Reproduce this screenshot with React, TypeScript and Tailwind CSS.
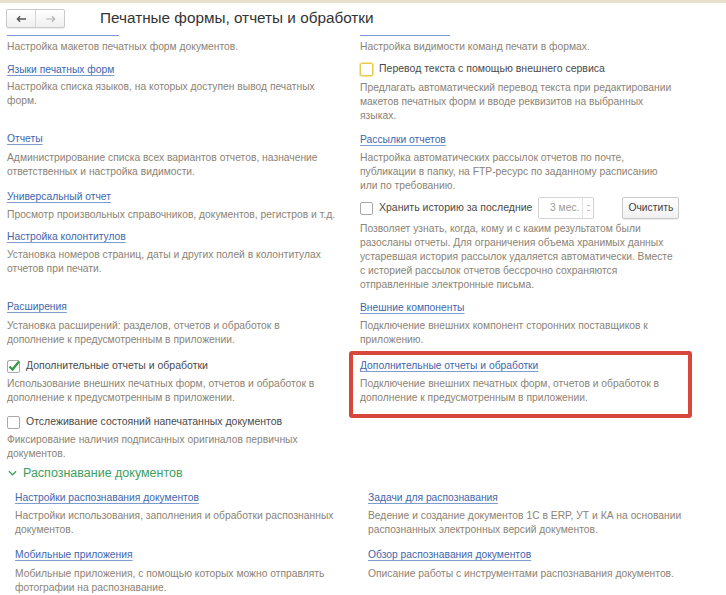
import type { ReactNode } from "react";

const font = { fontFamily: '"Liberation Sans", Arial, sans-serif' };

function Lnk({ children, className = "" }: { children: ReactNode; className?: string }) {
  return (
    <div className={`text-[10.3px] leading-[14px] h-[14px] ${className}`}>
      <span className="text-[#3e66ad] underline underline-offset-2 decoration-[#7f9ccf]">{children}</span>
    </div>
  );
}

function Desc({ lines, className = "" }: { lines: string[]; className?: string }) {
  return (
    <div className={`text-[10.3px] leading-[14px] text-[#8b8376] ${className}`}>
      {lines.map((l) => (
        <div key={l} className="whitespace-nowrap h-[14px]">{l}</div>
      ))}
    </div>
  );
}

function Check({ checked = false, focus = false }: { checked?: boolean; focus?: boolean }) {
  return (
    <span
      className={`relative inline-block w-[13px] h-[13px] rounded-[2px] bg-white shrink-0 border ${
        focus ? "border-[#e8c84a] shadow-[0_0_0_1px_#f6e6a0]" : "border-[#a9a9a9]"
      }`}
    >
      {checked && (
        <svg viewBox="0 0 14 14" className="absolute -left-[1px] -top-[2px] w-[14px] h-[14px]">
          <path d="M2.5 7.5 L5.5 10.5 L12 2.5" fill="none" stroke="#2f9a3e" strokeWidth="2.2" />
        </svg>
      )}
    </span>
  );
}

function CheckRow({ label, checked, focus, className = "" }: { label: string; checked?: boolean; focus?: boolean; className?: string }) {
  return (
    <div className={`flex items-center gap-[6px] h-[16px] text-[10.5px] text-[#4a4a4a] ${className}`}>
      <Check checked={checked} focus={focus} />
      <span className="whitespace-nowrap">{label}</span>
    </div>
  );
}

export default function App() {
  return (
    <div className="w-[726px] h-[595px] bg-white overflow-hidden" style={font}>
      <div className="h-[3px] bg-[#e8e1cb]" />

      {/* Header */}
      <div className="flex items-center h-[31px] pl-[6px]">
        <div className="flex h-[19px] border border-[#c9c9c9] rounded-[2px] bg-gradient-to-b from-white to-[#efefef] shadow-[0_1px_1px_rgba(0,0,0,0.08)]">
          <div className="w-[29px] flex items-center justify-center border-r border-[#d6d6d6]">
            <svg viewBox="0 0 12 8" className="w-[11px] h-[8px]">
              <path d="M11 4 H2 M4.5 1 L1.5 4 L4.5 7" fill="none" stroke="#555" strokeWidth="1.5" />
            </svg>
          </div>
          <div className="w-[28px] flex items-center justify-center">
            <svg viewBox="0 0 12 8" className="w-[11px] h-[8px]">
              <path d="M1 4 H10 M7.5 1 L10.5 4 L7.5 7" fill="none" stroke="#b3b3b3" strokeWidth="1.3" />
            </svg>
          </div>
        </div>
        <div className="ml-[35px] text-[15.3px] text-[#333] whitespace-nowrap">Печатные формы, отчеты и обработки</div>
      </div>

      {/* Two columns */}
      <div className="flex">
        {/* Left */}
        <div className="w-[353px] pl-[7px] flex flex-col">
          <div className="mt-[1px] h-px w-[112px] bg-[#7a9bd0]" />
          <Desc className="mt-[4px]" lines={["Настройка макетов печатных форм документов."]} />
          <Lnk className="mt-[9px]">Языки печатных форм</Lnk>
          <Desc className="mt-[3px]" lines={["Настройка списка языков, на которых доступен вывод печатных", "форм."]} />
          <Lnk className="mt-[24px]">Отчеты</Lnk>
          <Desc className="mt-[5px]" lines={["Администрирование списка всех вариантов отчетов, назначение", "ответственных и настройка видимости."]} />
          <Lnk className="mt-[11px]">Универсальный отчет</Lnk>
          <Desc className="mt-[4px]" lines={["Просмотр произвольных справочников, документов, регистров и т.д."]} />
          <Lnk className="mt-[8px]">Настройка колонтитулов</Lnk>
          <Desc className="mt-[4px]" lines={["Установка номеров страниц, даты и других полей в колонтитулах", "отчетов при печати."]} />
          <Lnk className="mt-[24px]">Расширения</Lnk>
          <Desc className="mt-[5px]" lines={["Установка расширений: разделов, отчетов и обработок в", "дополнение к предусмотренным в приложении."]} />
          <CheckRow className="mt-[11px]" checked label="Дополнительные отчеты и обработки" />
          <Desc className="mt-[3px]" lines={["Использование внешних печатных форм, отчетов и обработок в", "дополнение к предусмотренным в приложении."]} />
          <CheckRow className="mt-[9px]" label="Отслеживание состояний напечатанных документов" />
          <Desc className="mt-[3px]" lines={["Фиксирование наличия подписанных оригиналов первичных", "документов."]} />
        </div>

        {/* Right */}
        <div className="flex-1 pl-[7px] flex flex-col">
          <div className="mt-[1px] h-px w-[90px] bg-[#7a9bd0]" />
          <Desc className="mt-[4px]" lines={["Настройка видимости команд печати в формах."]} />
          <CheckRow className="mt-[7px]" focus label="Перевод текста с помощью внешнего сервиса" />
          <Desc className="mt-[4px]" lines={["Предлагать автоматический перевод текста при редактировании", "макетов печатных форм и вводе реквизитов на выбранных", "языках."]} />
          <Lnk className="mt-[10px]">Рассылки отчетов</Lnk>
          <Desc className="mt-[4px]" lines={["Настройка автоматических рассылок отчетов по почте,", "публикации в папку, на FTP-ресурс по заданному расписанию", "или по требованию."]} />
          <div className="mt-[4px] flex items-center h-[22px]">
            <CheckRow className="text-[10.2px]" label="Хранить историю за последние" />
            <div className="ml-[6px] flex h-[22px] w-[56px] border border-[#d4d4d4] rounded-[2px] bg-white">
              <div className="flex-1 flex items-center justify-end pr-[3px] text-[10.3px] text-[#9a9a9a]">3 мес.</div>
              <div className="w-[11px] border-l border-[#e2e2e2] flex flex-col items-center justify-center gap-[4px]">
                <span className="w-[3px] h-px bg-[#bbb]" />
                <span className="w-[3px] h-px bg-[#bbb]" />
              </div>
            </div>
            <div className="ml-[28px] h-[22px] w-[57px] flex items-center justify-center border border-[#c9c9c9] rounded-[2px] bg-gradient-to-b from-white to-[#f0f0f0] text-[10.3px] text-[#444] shadow-[0_1px_1px_rgba(0,0,0,0.08)]">
              Очистить
            </div>
          </div>
          <Desc
            className="mt-[3px]"
            lines={[
              "Позволяет узнать, когда, кому и с каким результатом были",
              "разосланы отчеты. Для ограничения объема хранимых данных",
              "устаревшая история рассылок удаляется автоматически. Вместе",
              "с историей рассылок отчетов бессрочно сохраняются",
              "отправленные электронные письма.",
            ]}
          />
          <Lnk className="mt-[9px]">Внешние компоненты</Lnk>
          <Desc className="mt-[4px]" lines={["Подключение внешних компонент сторонних поставщиков к", "приложению."]} />
          <div className="mt-[4px] -ml-[11px] w-[343px] h-[67px] border-[4px] border-[#d6483c] rounded-[3px] pl-[7px] pt-[4px]">
            <Lnk>Дополнительные отчеты и обработки</Lnk>
            <Desc className="mt-[4px]" lines={["Подключение внешних печатных форм, отчетов и обработок в", "дополнение к предусмотренным в приложении."]} />
          </div>
        </div>
      </div>

      {/* Recognition group */}
      <div className="mt-[3px] pl-[8px] flex items-center gap-[6px] h-[18px] text-[12.5px] text-[#3d9e62]">
        <svg viewBox="0 0 10 6" className="w-[9px] h-[6px]">
          <path d="M1 1 L5 5 L9 1" fill="none" stroke="#3d9e62" strokeWidth="1.4" />
        </svg>
        <span className="whitespace-nowrap">Распознавание документов</span>
      </div>
      <div className="flex">
        <div className="w-[353px] pl-[15px] flex flex-col">
          <Lnk className="mt-[9px]">Настройки распознавания документов</Lnk>
          <Desc className="mt-[4px]" lines={["Настройки использования, заполнения и обработки распознанных", "документов."]} />
          <Lnk className="mt-[11px]">Мобильные приложения</Lnk>
          <Desc className="mt-[5px]" lines={["Мобильные приложения, с помощью которых можно отправлять", "фотографии на распознавание."]} />
        </div>
        <div className="flex-1 pl-[15px] flex flex-col">
          <Lnk className="mt-[9px]">Задачи для распознавания</Lnk>
          <Desc className="mt-[4px]" lines={["Ведение и создание документов 1С в ERP, УТ и КА на основании", "распознанных электронных версий документов."]} />
          <Lnk className="mt-[11px]">Обзор распознавания документов</Lnk>
          <Desc className="mt-[5px]" lines={["Описание работы с инструментами распознавания документов."]} />
        </div>
      </div>
    </div>
  );
}
